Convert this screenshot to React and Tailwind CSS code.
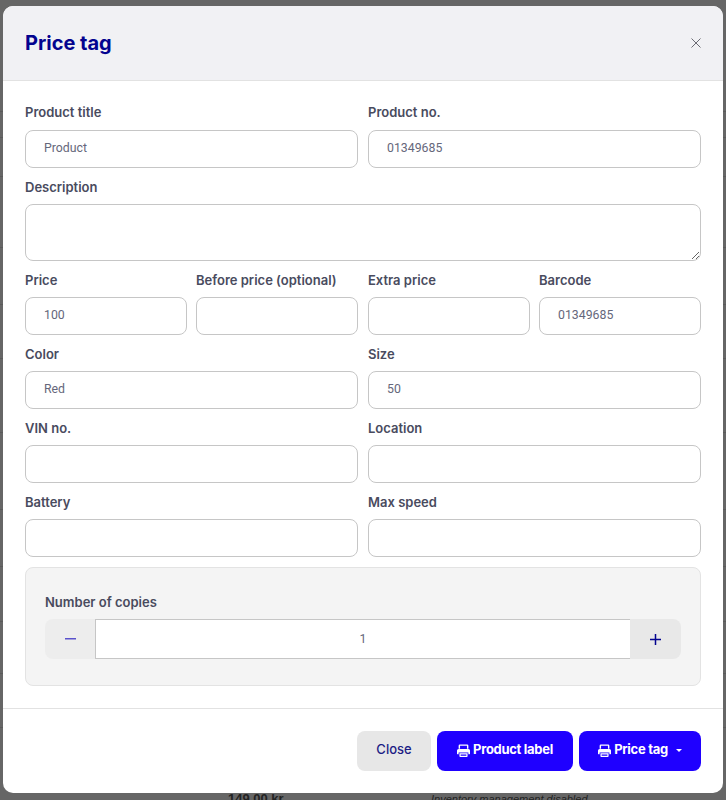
const backdropRows = [112, 26, 39, 71, 57, 54, 74, 77, 57, 55, 52, 54]

function PrintIcon() {
  return (
    <svg width="13" height="13" viewBox="0 0 512 512" fill="currentColor" fillRule="evenodd" className="shrink-0">
      <path d="M112 16h288a48 48 0 0 1 48 48v120h-56V72H120v112H64V64a48 48 0 0 1 48-48z" />
      <path d="M64 192h384a64 64 0 0 1 64 64v128a16 16 0 0 1-16 16h-48v-64H64v64H16a16 16 0 0 1-16-16V256a64 64 0 0 1 64-64z" />
      <path d="M96 368h320v112a32 32 0 0 1-32 32H128a32 32 0 0 1-32-32zM144 416v48h224v-48z" />
    </svg>
  )
}

function Field({ label, value, first }) {
  return (
    <div className="mb-[10px]">
      <label className={`block text-[13px] leading-[18px] font-semibold text-[#494b5e] whitespace-nowrap ${first ? "h-[27px]" : "h-[26px]"}`}>
        {label}
      </label>
      <input
        readOnly
        defaultValue={value}
        className="block w-full h-[38px] rounded-lg border border-[#c6c6c6] bg-white pl-[18px] pr-3 pb-[2px] text-[12.3px] font-['Roboto',sans-serif] text-[#65677b] outline-none"
      />
    </div>
  )
}

export default function App() {
  return (
    <div className="relative h-screen overflow-hidden bg-[#666666] font-['Inter',sans-serif]">
      {/* page behind the dialog, only the edges show */}
      <div className="flex flex-col">
        {backdropRows.map((height, i) => (
          <div key={i} className="border-b border-[#5a5a5a]" style={{ height }} />
        ))}
      </div>
      <div className="absolute left-[228px] top-[789px] text-[13px] font-bold font-['Liberation_Sans',sans-serif] text-[#222222]">149,00 kr</div>
      <div className="absolute left-[431px] top-[791px] text-[11px] italic font-['Liberation_Sans',sans-serif] text-[#222222]">Inventory management disabled</div>

      <div className="absolute left-[3px] right-[3px] top-[6px] rounded-[10px] bg-white overflow-hidden">
        <div className="flex h-[75px] items-center justify-between border-b border-[#e2e2e2] bg-[#f1f1f4] px-[22px]">
          <h5 className="text-[20px] font-bold text-[#03038f]">Price tag</h5>
          <button className="flex h-[10px] w-[10px] items-center justify-center text-[#6b6b73]">
            <svg width="10" height="10" viewBox="0 0 10 10" fill="none" stroke="currentColor" strokeWidth="1">
              <path d="M0.5 0.5L9.5 9.5M9.5 0.5L0.5 9.5" />
            </svg>
          </button>
        </div>

        <div className="border-b border-[#e2e2e2] px-[22px] pt-[22px] pb-[22px]">
          <div className="grid grid-cols-2 gap-x-[10px]">
            <Field first label="Product title" value="Product" />
            <Field first label="Product no." value="01349685" />
          </div>
          <div className="mb-[10px]">
            <label className="block h-[26px] text-[13px] leading-[18px] font-semibold text-[#494b5e]">Description</label>
            <textarea className="block h-[57px] w-full rounded-lg border border-[#c6c6c6] bg-white outline-none" />
          </div>
          <div className="grid grid-cols-2 gap-x-[10px]">
            <div className="grid grid-cols-2 gap-x-[9px]">
              <Field label="Price" value="100" />
              <Field label="Before price (optional)" value="" />
            </div>
            <div className="grid grid-cols-2 gap-x-[9px]">
              <Field label="Extra price" value="" />
              <Field label="Barcode" value="01349685" />
            </div>
          </div>
          <div className="grid grid-cols-2 gap-x-[10px]">
            <Field label="Color" value="Red" />
            <Field label="Size" value="50" />
            <Field label="VIN no." value="" />
            <Field label="Location" value="" />
            <Field label="Battery" value="" />
            <Field label="Max speed" value="" />
          </div>

          <div className="rounded-lg border border-[#e3e3e3] bg-[#f4f4f4] px-[19px] pt-[25px] pb-[26px]">
            <label className="block h-[26px] text-[13px] leading-[18px] font-semibold text-[#494b5e]">Number of copies</label>
            <div className="flex h-10">
              <button className="flex w-[50px] items-center justify-center rounded-l-lg bg-[#ededed]">
                <svg width="11" height="2" viewBox="0 0 11 2"><rect width="11" height="1.5" fill="#5a52cc" /></svg>
              </button>
              <input
                readOnly
                defaultValue="1"
                className="min-w-0 flex-1 border-y border-l border-[#c6c6c6] bg-white text-center text-[12.3px] font-['Roboto',sans-serif] text-[#65677b] outline-none"
              />
              <button className="flex w-[51px] items-center justify-center rounded-r-lg bg-[#e8e8e8]">
                <svg width="11" height="11" viewBox="0 0 11 11"><path d="M0 5.5H11M5.5 0V11" stroke="#03038f" strokeWidth="1.5" /></svg>
              </button>
            </div>
          </div>
        </div>

        <div className="flex justify-end gap-[6px] p-[22px]">
          <button className="h-10 w-[74px] rounded-lg bg-[#e7e7e7] pb-[2px] text-[13px] font-medium text-[#1c1c85]">Close</button>
          <button className="flex h-10 w-[136px] items-center justify-center gap-[3px] rounded-lg bg-[#1f00ff] pb-[2px] text-[13px] font-bold tracking-[-0.3px] text-white">
            <PrintIcon />
            Product label
          </button>
          <button className="flex h-10 w-[122px] items-center justify-center gap-[3px] rounded-lg bg-[#1f00ff] pb-[2px] text-[13px] font-bold tracking-[-0.3px] text-white">
            <PrintIcon />
            Price tag
            <span className="ml-[5px] h-0 w-0 border-x-[3.5px] border-t-[3.5px] border-x-transparent border-t-white" />
          </button>
        </div>
      </div>
    </div>
  )
}
